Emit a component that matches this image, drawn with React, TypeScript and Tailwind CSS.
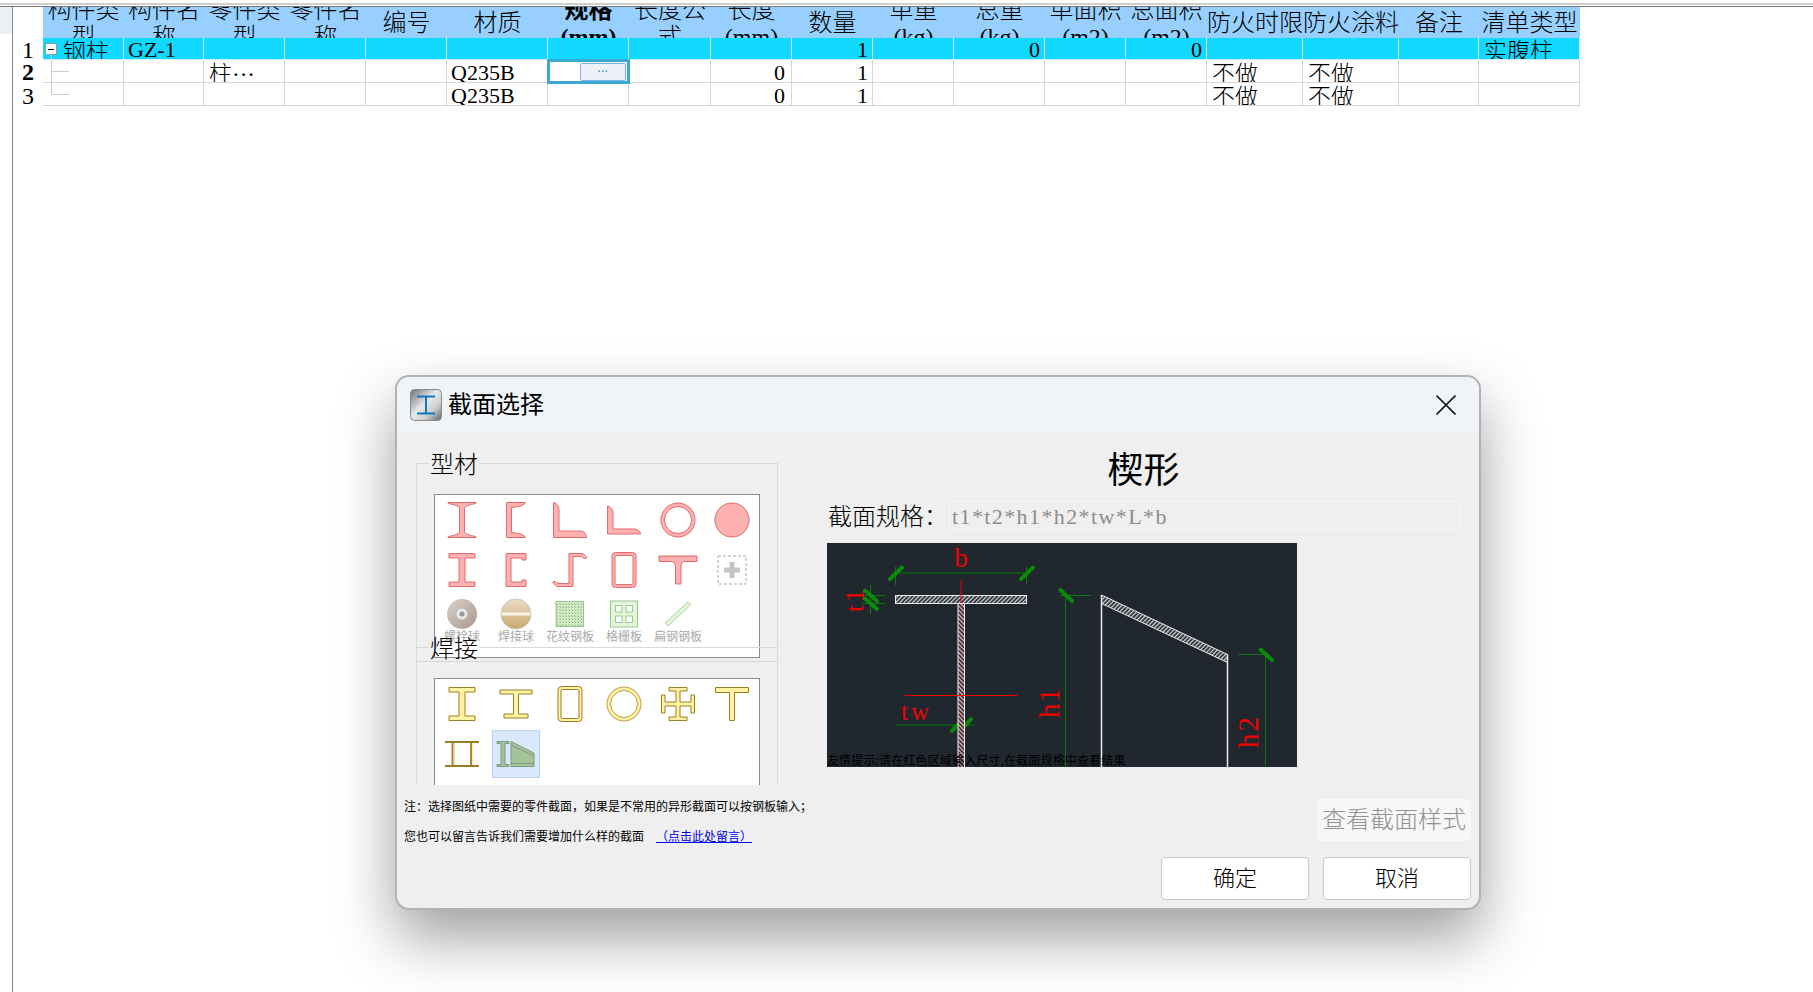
import React from 'react';

// 表格列: 每列宽度写在 grid-cols 里
const gridCols = 'grid-cols-[81px_80px_81px_81px_81px_101px_81px_82px_81px_81px_81px_91px_81px_81px_96px_96px_80px_101px]';

const headers: { a: string; b?: string; bold?: boolean }[] = [
  { a: '构件类型' },
  { a: '构件名称' },
  { a: '零件类型' },
  { a: '零件名称' },
  { a: '编号' },
  { a: '材质' },
  { a: '规格', b: '(mm)', bold: true },
  { a: '长度公式' },
  { a: '长度', b: '(mm)' },
  { a: '数量' },
  { a: '单重', b: '(kg)' },
  { a: '总重', b: '(kg)' },
  { a: '单面积', b: '(m2)' },
  { a: '总面积', b: '(m2)' },
  { a: '防火时限' },
  { a: '防火涂料' },
  { a: '备注' },
  { a: '清单类型' },
];

const row1 = ['钢柱', 'GZ-1', '', '', '', '', '', '', '', '1', '', '0', '', '0', '', '', '', '实腹柱'];
const row2 = ['', '', '柱···', '', '', 'Q235B', '', '', '0', '1', '', '', '', '', '不做', '不做', '', ''];
const row3 = ['', '', '', '', '', 'Q235B', '', '', '0', '1', '', '', '', '', '不做', '不做', '', ''];

const rightAligned = [8, 9, 11, 13];

const pink = { fill: '#ffb0b0', stroke: '#e26a6a', strokeWidth: 1 };
const gold = { fill: '#fff3a3', stroke: '#9a7c22', strokeWidth: 1 };

const Svg = ({ children }: { children: React.ReactNode }) => (
  <svg width="44" height="44" viewBox="0 0 44 44">
    {children}
  </svg>
);

const Ring = ({ c }: { c: string }) => (
  <>
    <circle cx="22" cy="22" r="17" fill={c === 'pink' ? '#ffb0b0' : '#fff3a3'} stroke={c === 'pink' ? '#e26a6a' : '#b89c3c'} />
    <circle cx="22" cy="22" r="13.5" fill="#fff" stroke={c === 'pink' ? '#e26a6a' : '#b89c3c'} />
  </>
);

const Tube = ({ c }: { c: string }) => (
  <>
    <rect x="10" y="4.5" width="24" height="35" rx="3.5" fill={c === 'pink' ? '#ffb0b0' : '#fff3a3'} stroke={c === 'pink' ? '#e26a6a' : '#9a7c22'} />
    <rect x="13" y="7.5" width="18" height="29" rx="1.5" fill="#fff" stroke={c === 'pink' ? '#e26a6a' : '#9a7c22'} />
  </>
);

const rolledIcons = [
  <path {...pink} d="M8 4.5H36V5.5Q26 7 24.5 10V34Q26 37 36 38.5V39.5H8V38.5Q18 37 19.5 34V10Q18 7 8 5.5Z" />,
  <path {...pink} d="M12.5 4.5H31.5Q30 8.5 17.5 9.5V34.5Q30 35.5 31.5 39.5H12.5Z" />,
  <path {...pink} d="M5.5 4.5Q11 6 11 12V33H33Q38 34 38.5 39.5H5.5Z" />,
  <path {...pink} d="M5.5 8Q11 9.5 11 15V31H33Q38 32 38.5 36H5.5Z" />,
  <Ring c="pink" />,
  <circle cx="22" cy="22" r="17" {...pink} />,
  <path {...pink} d="M9 5.5H35V10H25V34H35V38.5H9V34H19V10H9Z" />,
  <path {...pink} d="M12 5.5H32V12H28V10H17V34H28V32H32V38.5H12Z" />,
  <path {...pink} d="M21 5.5H35L39 9.5L37 11L33.5 8.5H25V38.5H9L4.5 34.5L6 33L10 35.5H21Z" />,
  <Tube c="pink" />,
  <path {...pink} d="M3 8H41V13.5H28Q25 14 25 19V36H19.5V19Q19.5 14 15 13.5H3Z" />,
  <>
    <rect x="8" y="8" width="28" height="28" fill="none" stroke="#aaa" strokeDasharray="3 2" />
    <path d="M14 22H30M22 14V30" stroke="#c4c4c4" strokeWidth="5" />
  </>,
];

const weldedIcons = [
  <path {...gold} d="M9 5.5H35V10H25V34H35V38.5H9V34H19V10H9Z" />,
  <path {...gold} d="M6 8H38V12H24.5V32H34V36H10V32H19.5V12H6Z" />,
  <Tube c="gold" />,
  <Ring c="gold" />,
  <path {...gold} d="M13 5.5H31V9H24V20H35V13H38.5V31H35V24H24V35H31V38.5H13V35H20V24H9V31H5.5V13H9V20H20V9H13Z" />,
  <path {...gold} d="M5.5 5.5H38.5V10.5H24.5V38.5H19.5V10.5H5.5Z" />,
  <>
    <path d="M5 9H39V11H5ZM5 33H39V35H5Z" fill="#9a7c22" />
    <path d="M11.5 11H13.5V33H11.5ZM30 11H32V33H30Z" fill="#a8892c" />
    <path d="M14 11H15V33H14ZM32.5 11H33.5V33H32.5Z" fill="#e8dfb4" />
  </>,
];

const materials: { label: string; icon: React.ReactNode }[] = [
  {
    label: '螺栓球',
    icon: (
      <>
        <defs>
          <linearGradient id="bolt" x1="0" y1="0" x2="1" y2="1">
            <stop offset="0" stopColor="#d9d0c8" />
            <stop offset="1" stopColor="#a8988e" />
          </linearGradient>
        </defs>
        <circle cx="22" cy="22" r="15" fill="url(#bolt)" />
        <circle cx="22" cy="22" r="5.5" fill="#e6e6e6" />
        <circle cx="22" cy="22" r="2.5" fill="#999" />
      </>
    ),
  },
  {
    label: '焊接球',
    icon: (
      <>
        <defs>
          <linearGradient id="weld" x1="0" y1="0" x2="0" y2="1">
            <stop offset="0" stopColor="#eadcc6" />
            <stop offset="1" stopColor="#c9a86c" />
          </linearGradient>
        </defs>
        <circle cx="22" cy="22" r="15" fill="url(#weld)" stroke="#c8c8c8" />
        <rect x="7.5" y="20.5" width="29" height="3" fill="#f8f4e6" />
      </>
    ),
  },
  {
    label: '花纹钢板',
    icon: (
      <>
        <defs>
          <pattern id="dots" width="3" height="3" patternUnits="userSpaceOnUse">
            <rect width="3" height="3" fill="#d3ecc6" />
            <rect width="1" height="1" fill="#8fb080" />
            <rect x="2" y="2" width="1" height="1" fill="#a5c497" />
          </pattern>
        </defs>
        <rect x="8" y="9.5" width="27.5" height="25" fill="url(#dots)" stroke="#9cc48e" />
      </>
    ),
  },
  {
    label: '格栅板',
    icon: (
      <>
        <rect x="8.5" y="9" width="27" height="26" fill="#e3f7da" stroke="#9cc48e" />
        <path d="M13.5 13.5h6.5v6.5h-6.5zM24 13.5h6.5v6.5H24zM13.5 24h6.5v6.5h-6.5zM24 24h6.5v6.5H24z" fill="#fff" stroke="#9cc48e" />
      </>
    ),
  },
  {
    label: '扁钢钢板',
    icon: <path d="M9 31L32 9.5L35 12.5L12 34Z" fill="#e0f3d6" stroke="#b2d4a4" />,
  },
];

const Cell = ({ text, index, cls }: { text: string; index: number; cls: string }) => {
  const right = rightAligned.includes(index);
  const latin = /^[\x00-\x7F]+$/.test(text);
  return (
    <div className={`relative flex h-full overflow-hidden whitespace-nowrap border-r border-b ${cls} ${latin ? 'text-[22px] leading-[20px]' : 'leading-[23px]'} ${right ? (index === 8 ? 'justify-end pr-[6px]' : 'justify-end pr-[4px]') : latin ? 'pl-[4px]' : 'pl-[5px]'}`}>
      {text}
    </div>
  );
};

const GroupBox = ({ title, className, children }: { title: string; className: string; children: React.ReactNode }) => (
  <fieldset className={`w-[362px] border border-[#d8d8d8] ${className}`}>
    <legend className="ml-[12px] px-[1px] text-[24px] leading-[30px] text-black">
      <span className="inline-block translate-y-[2px]">{title}</span>
    </legend>
    {children}
  </fieldset>
);

const CadDrawing = () => (
  <svg width="470" height="224" viewBox="0 0 470 224" className="block">
    <defs>
      <pattern id="hatch" width="3" height="3" patternUnits="userSpaceOnUse" patternTransform="rotate(45)">
        <rect width="3" height="3" fill="#20272f" />
        <rect width="1.3" height="3" fill="#d8d8d8" />
      </pattern>
      <pattern id="hatchRed" width="3" height="3" patternUnits="userSpaceOnUse" patternTransform="rotate(-45)">
        <rect width="3" height="3" fill="#5a2a30" />
        <rect width="1.1" height="3" fill="#d0d0d0" />
      </pattern>
    </defs>
    <rect width="470" height="224" fill="#20272f" />
    {/* 标注线 */}
    <g stroke="#0a7a0a" strokeWidth="1" fill="none">
      <path d="M68.5 30H199.5M68.5 24V42M199.5 24V42" />
      <path d="M35 52.5H58M35 60.5H58M43.5 42V71" />
      <path d="M69 182H148" />
      <path d="M238.5 52V224M233 52.5H264" />
      <path d="M438.5 112V224M411 111.5H439" />
    </g>
    <g stroke="#0a8a0a" strokeWidth="4" strokeLinecap="round">
      <path d="M63 36L75 24.5M194 36L206 24.5" />
      <path d="M38 47.5L50 58M38 55.5L50 66" />
      <path d="M125 188L136 176M133 188L144 176" />
      <path d="M233.5 47L245 58M433.5 106.5L445 117" />
    </g>
    {/* 截面 */}
    <rect x="68.5" y="52.5" width="131" height="8" fill="url(#hatch)" stroke="#ececec" />
    <rect x="131" y="60.5" width="6.5" height="164" fill="url(#hatchRed)" stroke="#ececec" />
    <path d="M274.5 52L400.5 111.5V119.5L274.5 60.5Z" fill="url(#hatch)" stroke="#ececec" />
    <path d="M274.5 52V224M400.5 111.5V224" stroke="#ececec" strokeWidth="1.5" fill="none" />
    {/* 红色尺寸 */}
    <path d="M134 37V60M77.5 152.5H190.5" stroke="#f00000" strokeWidth="1" fill="none" />
    <g fill="#f00000" fontFamily="'Liberation Serif', serif">
      <text x="134" y="24" fontSize="27" textAnchor="middle">b</text>
      <text x="74" y="177" fontSize="25" letterSpacing="3">tw</text>
      <text transform="translate(36 69) rotate(-90)" fontSize="25" letterSpacing="3">t1</text>
      <text transform="translate(232 175) rotate(-90)" fontSize="29" letterSpacing="1">h1</text>
      <text transform="translate(431 205) rotate(-90)" fontSize="29" letterSpacing="2">h2</text>
    </g>
  </svg>
);

export default function App() {
  return (
    <div className="relative flex h-[992px] w-full flex-col overflow-hidden bg-white font-['Liberation_Serif','Noto_Sans_CJK_SC',serif] text-[23px] font-light text-black">
      {/* 顶部窗口边 */}
      <div className="h-[7px] shrink-0 border-b border-[#777] bg-white">
        <div className="mt-[3px] h-[2px] bg-[#cfcfcf]" />
      </div>

      <div className="flex min-h-0 flex-1">
        {/* 左侧窄条 */}
        <div className="w-[13px] shrink-0 border-r border-[#8a8a8a]">
          <div className="h-[27px] bg-[#ecf0f5]" />
        </div>

        {/* 行号 */}
        <div className="grid w-[30px] shrink-0 grid-rows-[31px_22px_23px_23px] text-center text-[24px] leading-[23px]">
          <div />
          <div className="pt-[1px]">1</div>
          <div className="pt-[1px] font-bold">2</div>
          <div className="pt-[2px]">3</div>
        </div>

        {/* 表格 */}
        <div className={`grid h-[99px] w-[1537px] grid-rows-[31px_22px_23px_23px] ${gridCols}`}>
          {headers.map((h) => (
            <div key={h.a} className="flex h-full items-center justify-center overflow-hidden bg-[#97d0ff] pt-[2px] text-center text-[24px] leading-[27px]">
              <span className={h.bold ? 'font-bold' : ''}>
                {h.a}
                {h.b && <br />}
                {h.b}
              </span>
            </div>
          ))}
          {row1.map((t, i) =>
            i === 0 ? (
              <div key={i} className="relative flex h-full overflow-hidden border-r border-b border-[#d4eef8] bg-[#11d8ff] pt-[3px] pl-[20px] leading-[23px]">
                <span className="absolute top-[5px] left-[2px] flex h-[12px] w-[12px] items-center justify-center rounded-[2px] border border-[#999] bg-white">
                  <span className="h-[1px] w-[6px] bg-black" />
                </span>
                <span className="absolute top-[17px] left-[8px] h-[5px] w-px bg-[#ccc]" />
                {t}
              </div>
            ) : (
              <Cell key={i} text={t} index={i} cls="border-[#d4eef8] bg-[#11d8ff] pt-[2px]" />
            )
          )}
          {row2.map((t, i) =>
            i === 0 ? (
              <div key={i} className="relative h-full border-r border-b border-[#d6d6d6]">
                <span className="absolute top-0 left-[8px] h-[23px] w-px bg-[#ccc]" />
                <span className="absolute top-[11px] left-[8px] h-px w-[18px] bg-[#ccc]" />
              </div>
            ) : i === 6 ? (
              <div key={i} className="relative z-10 -mx-px -mt-px -mb-px flex items-center justify-end border-[3px] border-[#3aa8d0] bg-white pr-[1px]">
                <span className="flex h-[18px] w-[46px] items-center justify-center rounded-[2px] border border-[#7fb0e6] bg-[#edf0f7] font-['Liberation_Sans',sans-serif] text-[11px] font-bold leading-none text-[#5b9bd8]">
                  ···
                </span>
              </div>
            ) : (
              <Cell key={i} text={t} index={i} cls="border-[#d6d6d6] pt-[3px]" />
            )
          )}
          {row3.map((t, i) =>
            i === 0 ? (
              <div key={i} className="relative h-full border-r border-b border-[#d6d6d6]">
                <span className="absolute top-0 left-[8px] h-[11px] w-px bg-[#ccc]" />
                <span className="absolute top-[11px] left-[8px] h-px w-[18px] bg-[#ccc]" />
              </div>
            ) : (
              <Cell key={i} text={t} index={i} cls="border-[#d6d6d6] pt-[3px]" />
            )
          )}
        </div>
      </div>

      {/* 截面选择 弹窗 */}
      <div className="absolute top-[375px] left-[395px] flex h-[535px] w-[1086px] flex-col overflow-hidden rounded-[14px] border-2 border-[#b2b2b2] bg-[#efefef] shadow-[0_28px_60px_rgba(0,0,0,0.38)]">
        <div className="flex h-[56px] shrink-0 items-center bg-[#eff4f9] pr-[23px] pl-[13px]">
          <svg width="32" height="32" viewBox="0 0 32 32">
            <defs>
              <linearGradient id="metal" x1="0" y1="0" x2="1" y2="1">
                <stop offset="0" stopColor="#6f6f6f" />
                <stop offset="0.45" stopColor="#e8e8e8" />
                <stop offset="0.7" stopColor="#cfcfcf" />
                <stop offset="1" stopColor="#5f5f5f" />
              </linearGradient>
            </defs>
            <rect x="0.5" y="0.5" width="31" height="31" rx="4" fill="url(#metal)" stroke="#8a8a8a" />
            <path d="M7 6.5H25V8.5H17V23.5H25V25.5H7V23.5H15V8.5H7Z" fill="#0a7ac2" />
          </svg>
          <span className="ml-[6px] flex-1 text-[24px] leading-none font-normal">截面选择</span>
          <svg width="20" height="20" viewBox="0 0 20 20" className="-mt-[1px]">
            <path d="M0.5 0.5L19.5 19.5M19.5 0.5L0.5 19.5" stroke="#1a1a1a" strokeWidth="1.6" fill="none" />
          </svg>
        </div>

        <div className="flex min-h-0 flex-1">
          {/* 左侧截面列表 */}
          <div className="flex w-[431px] shrink-0 flex-col">
            <div className="ml-[19px] flex h-[352px] flex-col pt-[15px]">
              <GroupBox title="型材" className="shrink-0 pb-[3px]">
                <div className="mt-[16px] ml-[17px] h-[164px] w-[326px] overflow-hidden border border-[#888b94] bg-white">
                  <div className="grid grid-cols-6">
                    {rolledIcons.map((ic, i) => (
                      <div key={i} className="flex h-[50px] items-center justify-center">
                        <Svg>{ic}</Svg>
                      </div>
                    ))}
                    {materials.map((m) => (
                      <div key={m.label} className="-mt-[3px] flex flex-col items-center whitespace-nowrap font-['Noto_Sans_CJK_SC',sans-serif] text-[12px] leading-[14px] font-normal text-[#aaa]">
                        <Svg>{m.icon}</Svg>
                        <span className="-mt-[7px]">{m.label}</span>
                      </div>
                    ))}
                  </div>
                </div>
              </GroupBox>
              <GroupBox title="焊接" className="relative -mt-[30px] h-[153px] shrink-0 overflow-hidden border-b-0">
                <div className="mt-[16px] ml-[17px] h-[200px] w-[326px] border border-[#888b94] bg-white">
                  <div className="grid grid-cols-6">
                    {weldedIcons.map((ic, i) => (
                      <div key={i} className="flex h-[50px] items-center justify-center">
                        <Svg>{ic}</Svg>
                      </div>
                    ))}
                    <div className="flex h-[50px] items-center justify-center">
                      <div className="flex h-[48px] w-[48px] items-center justify-center border border-[#b8d2f3] bg-[#dae8fb]">
                        <svg width="40" height="30" viewBox="0 0 40 30">
                          <path d="M1 2.5H13V4.5H9V25.5H13V27.5H1V25.5H5V4.5H1Z" fill="#a5c39a" stroke="#7d9c7d" />
                          <path d="M15 2.5L38 14V27.5H15Z" fill="#a5c39a" stroke="#7d9c7d" />
                          <path d="M15 6L38 17M15 24.5H38" stroke="#7d9c7d" fill="none" />
                        </svg>
                      </div>
                    </div>
                  </div>
                </div>
              </GroupBox>
            </div>
            <div className="mt-[12px] ml-[7px] flex w-[420px] flex-col gap-[12px] whitespace-nowrap font-['Noto_Sans_CJK_SC',sans-serif] text-[12px] leading-[18px] font-normal">
              <p>注：选择图纸中需要的零件截面，如果是不常用的异形截面可以按钢板输入；</p>
              <p>
                您也可以留言告诉我们需要增加什么样的截面
                <a className="ml-[12px] text-[#0000ee] underline">（点击此处留言）</a>
              </p>
            </div>
          </div>

          {/* 右侧预览 */}
          <div className="flex w-[643px] shrink-0 flex-col">
            <h1 className="mt-[18px] pr-[12px] text-center text-[36px] leading-[40px] font-normal">楔形</h1>
            <div className="mt-[10px] flex h-[29px] items-center">
              <span className="w-[121px] shrink-0 pt-[3px] text-[24px] font-light">截面规格：</span>
              <div className="flex h-[29px] w-[511px] items-center border border-[#f7f7f7] pt-[1px] pl-[2px] text-[22px] tracking-[1.4px] text-[#8d8d8d]">
                t1*t2*h1*h2*tw*L*b
              </div>
            </div>
            <div className="relative mt-[13px] -ml-px w-[470px]">
              <CadDrawing />
              <span className="absolute bottom-0 left-0 whitespace-nowrap font-['Noto_Sans_CJK_SC',sans-serif] text-[12px] leading-[14px] font-normal tracking-[0.15px] text-black">
                友情提示:请在红色区域输入尺寸,在截面规格中查看结果
              </span>
            </div>
            <button className="mt-[32px] h-[42px] w-[154px] self-end rounded-[4px] bg-[#f7f7f7] text-[24px] font-light whitespace-nowrap text-[#929292]">
              查看截面样式
            </button>
            <div className="mt-[16px] flex justify-end gap-[14px]">
              <button className="h-[43px] w-[148px] rounded-[4px] border border-[#c8c8c8] bg-white text-[22px] font-light">确定</button>
              <button className="h-[43px] w-[148px] rounded-[4px] border border-[#c8c8c8] bg-white text-[22px] font-light">取消</button>
            </div>
          </div>
        </div>
      </div>
    </div>
  );
}
